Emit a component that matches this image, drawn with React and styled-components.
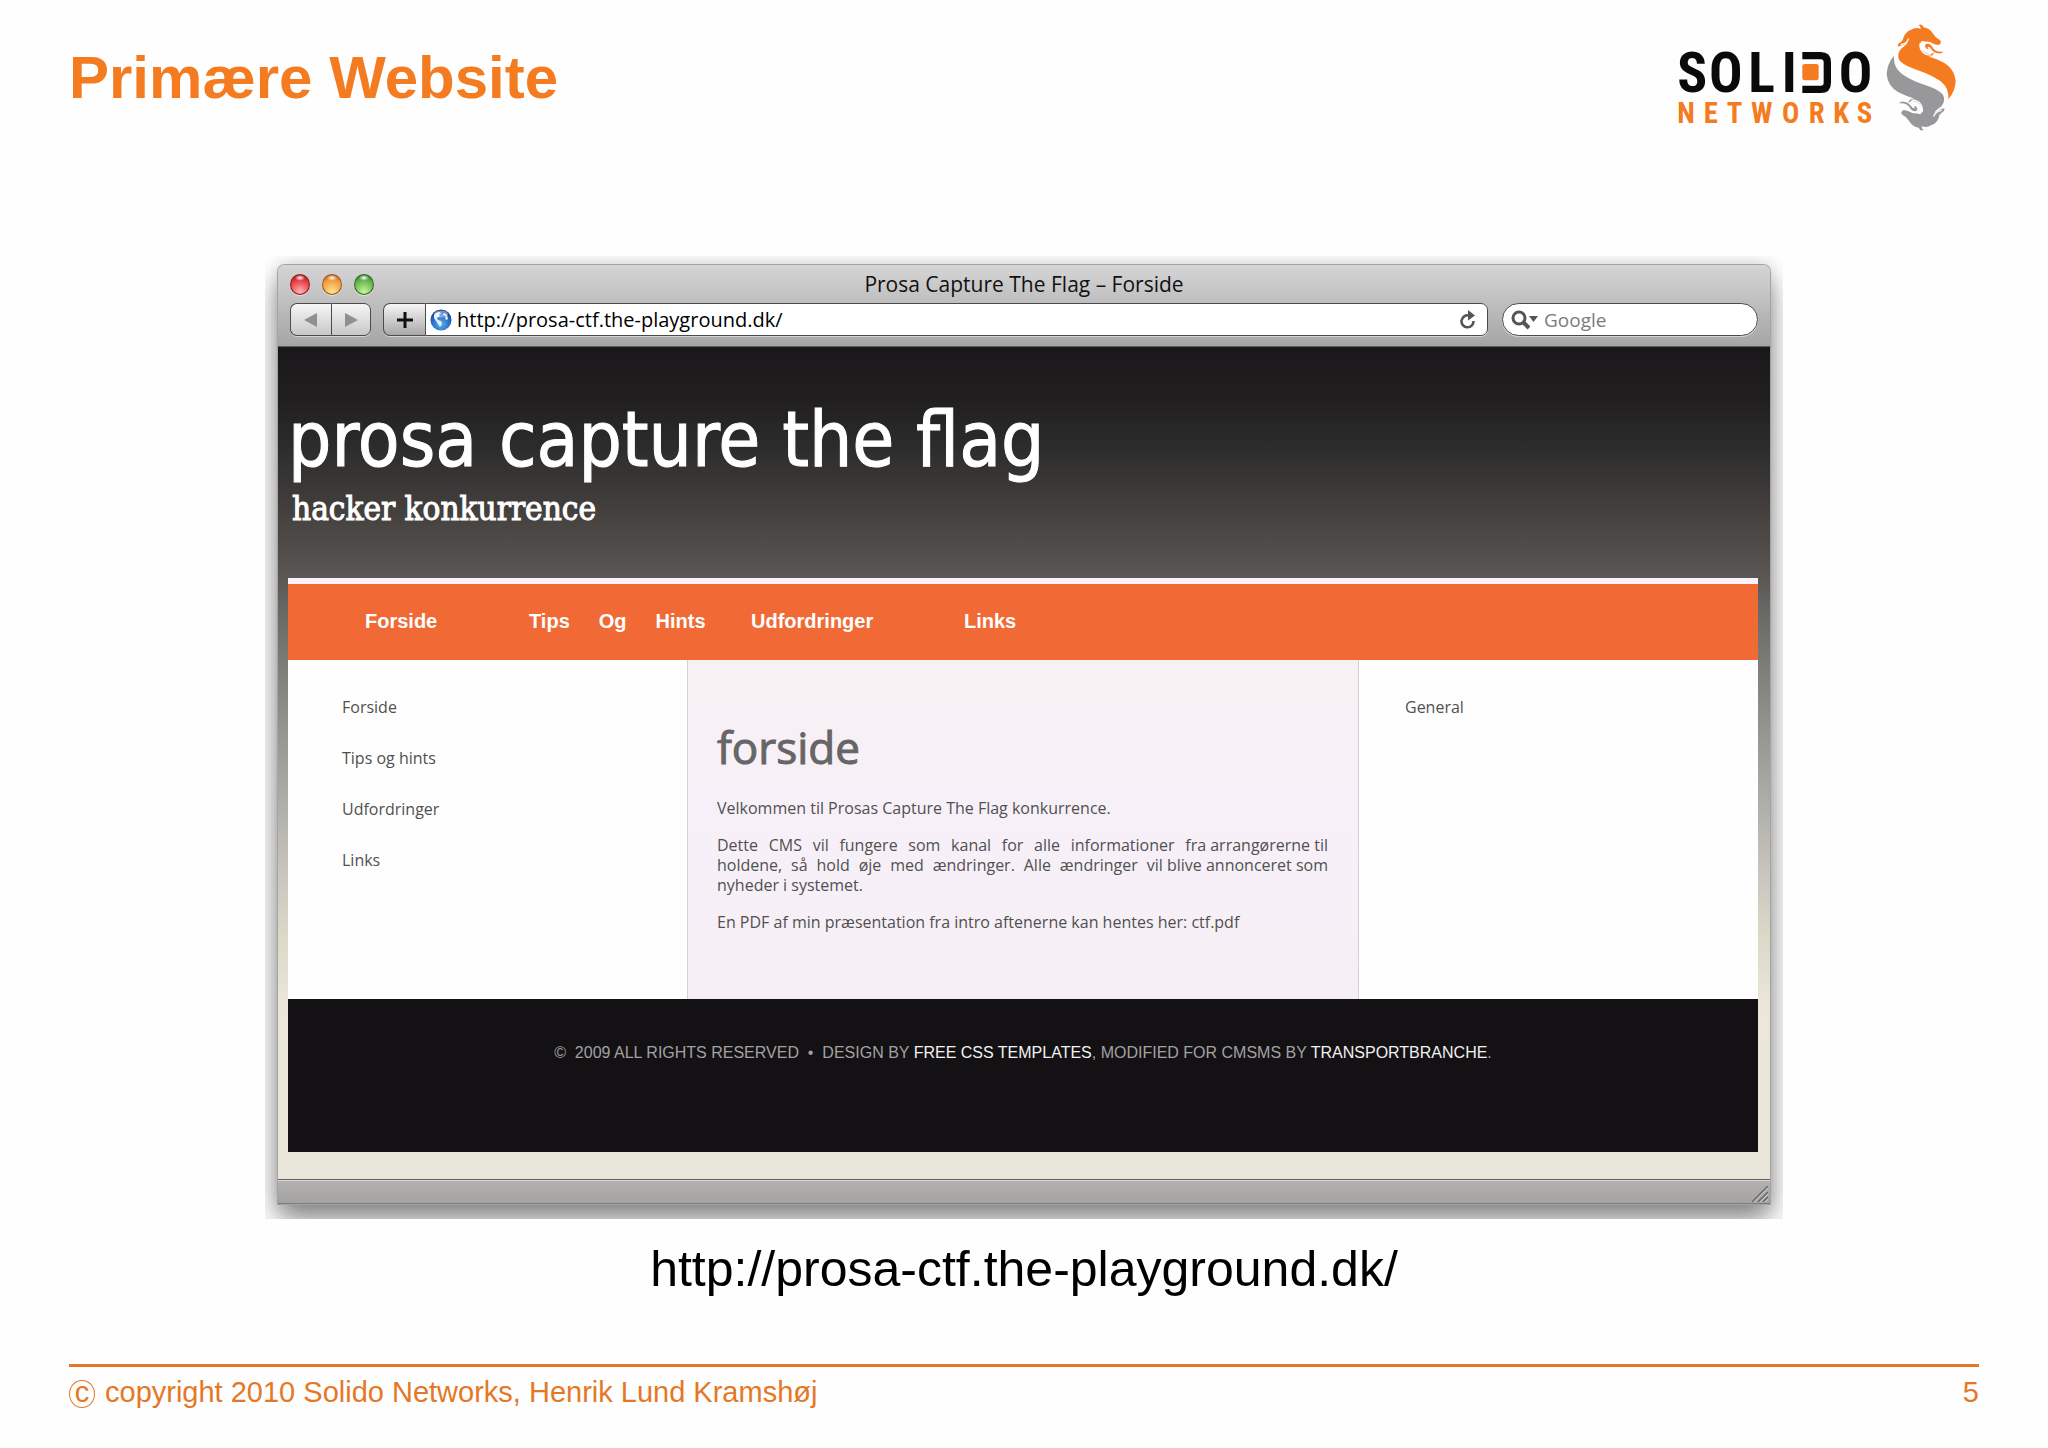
import React from 'react';
import styled, { createGlobalStyle } from 'styled-components';

const fonts = {
  slide: '"Liberation Sans", Arial, sans-serif',
  chrome: '"Open Sans", "Lucida Grande", sans-serif',
  display: '"DejaVu Sans Condensed", Tahoma, sans-serif',
  page: '"Open Sans", Tahoma, sans-serif',
  serif: '"DejaVu Serif Condensed", Georgia, serif',
  logo: '"Roboto Condensed", Roboto, sans-serif',
};

const colors = {
  brand: '#f47b20',
  rule: '#e47826',
  nav: '#f16a35',
  text: '#505050',
};

const GlobalStyle = createGlobalStyle`
  *, *::before, *::after { box-sizing: border-box; }
  body { margin: 0; background: #fefefe; font-family: ${fonts.slide}; }
  h1, h2, p, ul, figure { margin: 0; padding: 0; font-weight: 400; }
  ul { list-style: none; }
  a { color: inherit; text-decoration: none; }
`;

/* ---------- slide ---------- */

const Slide = styled.main`
  display: flex;
  flex-direction: column;
  min-height: 100vh;
  padding: 23px 69px 38px;
`;

const SlideHeader = styled.header`
  display: flex;
  justify-content: space-between;
  align-items: flex-start;
  padding-right: 22px;
`;

const SlideTitle = styled.h1`
  && { font-weight: 700; }
  padding-top: 19px;
  font-size: 60px;
  line-height: 72px;
  color: ${colors.brand};
`;

const LogoSvg = styled.svg`
  display: block;
  width: 280px;
  height: 108px;
  flex: none;
  font-family: ${fonts.logo};
  font-weight: 700;
`;

const Figure = styled.figure`
  margin-top: 125px;
  display: flex;
  flex-direction: column;
`;

const Shot = styled.div`
  margin: 0 196px;
  padding: 9px 13px 15px;
  overflow: hidden;
`;

const Caption = styled.figcaption`
  padding-top: 20px;
  font-size: 50px;
  line-height: 60px;
  text-align: center;
  color: #000;
`;

const SlideFooter = styled.footer`
  display: flex;
  justify-content: space-between;
  margin-top: auto;
  padding-top: 7px;
  border-top: 3px solid ${colors.rule};
  font-size: 29px;
  line-height: 36px;
  color: ${colors.rule};
`;

const Copyright = styled.p`
  display: flex;
  align-items: center;
  gap: 10px;
`;

const CircledC = styled.span`
  display: flex;
  align-items: center;
  justify-content: center;
  width: 26px;
  height: 28px;
  margin-top: 4px;
  padding-bottom: 4px;
  border: 1px solid currentColor;
  border-radius: 50%;
  line-height: 28px;
`;

/* ---------- browser window ---------- */

const Window = styled.section`
  border-radius: 7px 7px 0 0;
  box-shadow: 0 0 0 1px #a4a3a4, 0 0 18px rgba(0, 0, 0, 0.16),
    0 16px 28px rgba(0, 0, 0, 0.45);
`;

const Chrome = styled.div`
  border-radius: 7px 7px 0 0;
  border-bottom: 1px solid #5d5c5d;
  background: linear-gradient(#d6d5d6, #bfbebf 48%, #a6a5a6);
  padding: 0 12px 10px;
`;

const TitleBar = styled.div`
  display: grid;
  grid-template-columns: 1fr auto 1fr;
  align-items: center;
  height: 38px;
  font: 21px/28px ${fonts.chrome};
  color: #111;
`;

const Lights = styled.div`
  display: flex;
  gap: 12px;
`;

const Light = styled.button`
  width: 20px;
  height: 21px;
  padding: 0;
  border: 1px solid ${(p) => p.$edge};
  border-radius: 50%;
  background: radial-gradient(ellipse 5px 3px at 50% 15%, #fff, transparent),
    radial-gradient(circle at 50% 88%, ${(p) => p.$glow}, ${(p) => p.$tone} 65%, ${(p) => p.$edge});
  box-shadow: 0 1px 1px rgba(255, 255, 255, 0.6);
`;

const ToolBar = styled.div`
  display: flex;
  height: 33px;
`;

const ToolButton = styled.button`
  display: flex;
  align-items: center;
  justify-content: center;
  width: ${(p) => p.$width};
  padding: 0;
  border: 1px solid #4c4b4c;
  border-right-width: ${(p) => (p.$joined ? 0 : '1px')};
  border-radius: ${(p) => p.$radius};
  margin-right: ${(p) => (p.$joined ? 0 : '12px')};
  background: linear-gradient(#f7f6f7, ${(p) => p.$end || '#c9c8c9'});
  box-shadow: 0 1px 0 rgba(255, 255, 255, 0.5);
`;

const Field = styled.label`
  display: flex;
  align-items: center;
  gap: 5px;
  flex: ${(p) => (p.$grow ? '1' : '0 0 256px')};
  min-width: 0;
  margin-right: ${(p) => (p.$grow ? '14px' : 0)};
  padding: ${(p) => (p.$grow ? '0 11px 0 4px' : '0 16px 0 8px')};
  border: 1px solid #4c4b4c;
  border-radius: ${(p) => (p.$grow ? '0 7px 7px 0' : '17px')};
  background: #fff;
  box-shadow: 0 1px 0 rgba(255, 255, 255, 0.5);
`;

const FieldInput = styled.input`
  flex: 1;
  min-width: 0;
  padding: 0;
  border: 0;
  outline: 0;
  background: none;
  color: #000;
  font: ${(p) => p.$size}/28px ${fonts.chrome};
  &::placeholder { color: #7b7b7b; opacity: 1; }
`;

const IconButton = styled.button`
  display: flex;
  padding: 0;
  border: 0;
  background: none;
`;

const StatusBar = styled.div`
  display: flex;
  justify-content: flex-end;
  align-items: flex-end;
  height: 25px;
  padding: 0 2px 2px 0;
  border-top: 1px solid #636261;
  box-shadow: inset 0 1px 0 #d6d5d2, inset 0 -1px 0 #7d7c7b;
  background: linear-gradient(#b3b2b0, #a3a2a0);
`;

/* ---------- website ---------- */

const Site = styled.div`
  padding: 0 12px 27px 10px;
  background: linear-gradient(
    #1a181a, #201e1f 6%, #2d2c2c 12%, #413e3c 19%, #5b5755 28%, #666663 31%,
    #8c8b87 43%, #b2b1ac 56%, #ccc6bf 64%, #dcd9c9 71%, #ece7da 80%, #e9e6da
  );
`;

const Masthead = styled.header`
  padding: 49px 0 47px;
  color: #fff;
  -webkit-text-stroke: 1px #fff;
`;

const SiteTitle = styled.h2`
  font: 76px/88px ${fonts.display};
`;

const Tagline = styled.p`
  padding: 3px 0 0 4px;
  font: 33px/44px ${fonts.serif};
`;

const SiteNav = styled.nav`
  display: grid;
  grid-template-columns: 164px 222px 213px auto;
  padding: 25px 77px 27px;
  border-top: 6px solid #fbf1f8;
  background: ${colors.nav};
  font-size: 20px;
  font-weight: 700;
  line-height: 24px;
  color: #fff;
`;

const NavLink = styled.a`
  display: flex;
  gap: 29px;
`;

const Columns = styled.div`
  display: grid;
  grid-template-columns: 19fr 32fr 19fr;
  background: #fefefe;
  font: 16px/20px ${fonts.page};
  color: ${colors.text};
`;

const SideList = styled.ul`
  display: flex;
  flex-direction: column;
  gap: 31px;
  padding: 37px ${(p) => p.$inset} 0;
`;

const Article = styled.article`
  display: flex;
  flex-direction: column;
  gap: 17px;
  padding: 59px 30px 67px 29px;
  border: solid #d5d2d6;
  border-width: 0 1px;
  background: linear-gradient(#f7f1f3, #f7f0f8 40%, #f6eff6);
`;

const ArticleTitle = styled.h2`
  padding-bottom: 6px;
  font-size: 44px;
  line-height: 56px;
  color: #666;
  -webkit-text-stroke: 1px #666;
`;

const Paragraph = styled.p`
  text-align: justify;
`;

const Tight = styled.span`
  display: inline-block;
`;

const SiteFooter = styled.footer`
  padding: 44px 0 89px;
  background: #131113;
  font-size: 16px;
  line-height: 20px;
  text-align: center;
  color: #a2a1a2;
  a { color: #f2f2f0; }
`;

/* ---------- drawings ---------- */

const BEAST =
  'M776 44 Q786 39 791 51 Q809 54 818 69 Q826 83 842 91 Q845 98 838 103 Q828 105 818 99 Q808 92 797 94 ' +
  'Q790 90 784 93 Q776 104 784 117 Q794 131 812 131 Q820 129 823 124 Q818 141 803 138 Q826 144 852 157 ' +
  'Q884 176 887 211 Q886 242 865 267 Q868 233 842 213 Q815 194 778 181 Q742 170 724 156 Q713 148 715 131 ' +
  'Q718 117 731 109 Q742 102 744 93 Q736 103 714 109 Q712 100 722 96 Q730 91 731 80 Q738 63 754 58 Q765 50 782 55 Q783 49 776 44 Z';

function Beast() {
  return (
    <>
      <path d={BEAST} />
      <path
        d="M797 112 Q792 103 800 100 Q812 99 819 113 Q828 127 850 124 Q846 130 836 129 Q820 127 813 115 Q808 107 803 110 Q802 114 806 116 Q800 117 797 112 Z"
      />
      <path d="M781 98 Q777 112 787 124 Q797 134 813 134" fill="none" stroke="#fefefe" strokeWidth="4" />
      <path d="M746 84 Q742 100 722 103" fill="none" stroke="#fefefe" strokeWidth="4" />
    </>
  );
}

function Logo() {
  return (
    <LogoSvg viewBox="51 38 840 324" role="img" aria-label="Solido Networks">
      <text x="52 147 265 365" y="246" fontSize="167" fill="#0a0a0a">SOLI</text>
      <path
        d="M427 136 H482 Q502 136 502 156 V217 Q502 237 482 237 H427"
        fill="none" stroke="#0a0a0a" strokeWidth="22"
      />
      <rect x="427" y="161" width="49" height="49" rx="7" fill={colors.brand} />
      <text x="536" y="246" fontSize="167" fill="#0a0a0a">O</text>
      <text x="52 131 200 273 366 446 520 590" y="339" fontSize="86" fill={colors.brand}>NETWORKS</text>
      <g fill={colors.brand}><Beast /></g>
      <g fill="#98989a" transform="rotate(180 783.5 201.5)"><Beast /></g>
    </LogoSvg>
  );
}

function Arrow({ flip }) {
  return (
    <svg width="14" height="14" viewBox="0 0 14 14">
      <path d={flip ? 'M1 0 L14 7 L1 14 Z' : 'M13 0 L0 7 L13 14 Z'} fill="#919091" />
    </svg>
  );
}

function Plus() {
  return (
    <svg width="16" height="16" viewBox="0 0 16 16">
      <path d="M8 0 V16 M0 8 H16" stroke="#111" strokeWidth="3" />
    </svg>
  );
}

function Globe() {
  return (
    <svg width="22" height="22" viewBox="0 0 22 22">
      <defs>
        <radialGradient id="sea" cx="50%" cy="70%" r="65%">
          <stop offset="0" stopColor="#5fb0f0" />
          <stop offset="0.6" stopColor="#2c72c8" />
          <stop offset="1" stopColor="#173f88" />
        </radialGradient>
      </defs>
      <circle cx="11" cy="11" r="10.5" fill="url(#sea)" />
      <path
        d="M4 6 Q6 3 10 3 L11 5 L9 5 L10 7 L7 9 L8 11 L11 12 L12 15 L10 18 L8 15 L6 12 L4 9 Z M14 4 L17 6 L18 10 L16 11 L15 9 L16 7 L13 6 Z"
        fill="#dff0fc"
      />
      <ellipse cx="11" cy="5" rx="7" ry="3.5" fill="#fff" opacity="0.4" />
    </svg>
  );
}

function Reload() {
  return (
    <svg width="16" height="20" viewBox="0 0 16 20">
      <path d="M13.5 11 A6 6 0 1 1 9 5.500" fill="none" stroke="#555" strokeWidth="2.600" />
      <path d="M8 0 L15 5.500 L8 10.500 Z" fill="#555" />
    </svg>
  );
}

function Search() {
  return (
    <svg width="28" height="20" viewBox="0 0 28 20">
      <circle cx="8" cy="8" r="6" fill="none" stroke="#555" strokeWidth="3" />
      <path d="M12 12 L18 18" stroke="#555" strokeWidth="4" />
      <path d="M18 6 H27 L22.500 12 Z" fill="#555" />
    </svg>
  );
}

function Grip() {
  return (
    <svg width="16" height="16" viewBox="0 0 16 16">
      <path d="M0 16 L16 0 M6 16 L16 6 M11 16 L16 11" stroke="#6b6a69" strokeWidth="1.500" />
      <path d="M2 16 L16 2 M8 16 L16 8 M13 16 L16 13" stroke="#d0cfcc" strokeWidth="1" />
    </svg>
  );
}

/* ---------- composition ---------- */

const LIGHTS = [
  { name: 'Luk', edge: '#8d1a1f', tone: '#e5343c', glow: '#ffb5b5' },
  { name: 'Minimer', edge: '#a3521a', tone: '#f0963a', glow: '#ffe58e' },
  { name: 'Zoom', edge: '#2f6a22', tone: '#5fae48', glow: '#c8f59a' },
];

const NAV = [['Forside'], ['Tips', 'Og', 'Hints'], ['Udfordringer'], ['Links']];
const MENU = ['Forside', 'Tips og hints', 'Udfordringer', 'Links'];

function Website() {
  return (
    <Site>
      <Masthead>
        <SiteTitle>prosa capture the flag</SiteTitle>
        <Tagline>hacker konkurrence</Tagline>
      </Masthead>
      <SiteNav>
        {NAV.map((words) => (
          <NavLink href="#" key={words[0]}>
            {words.map((w) => <span key={w}>{w}</span>)}
          </NavLink>
        ))}
      </SiteNav>
      <Columns>
        <SideList $inset="54px">
          {MENU.map((item) => <li key={item}><a href="#">{item}</a></li>)}
        </SideList>
        <Article>
          <ArticleTitle>forside</ArticleTitle>
          <Paragraph>Velkommen til Prosas Capture The Flag konkurrence.</Paragraph>
          <Paragraph>
            Dette CMS vil fungere som kanal for alle informationer <Tight>fra arrangørerne til</Tight>{' '}
            holdene, så hold øje med ændringer. Alle ændringer <Tight>vil blive annonceret som</Tight>{' '}
            nyheder i systemet.
          </Paragraph>
          <Paragraph>
            En PDF af min præsentation fra intro aftenerne kan hentes her: <a href="#">ctf.pdf</a>
          </Paragraph>
        </Article>
        <SideList $inset="46px">
          <li><a href="#">General</a></li>
        </SideList>
      </Columns>
      <SiteFooter>
        ©&nbsp; 2009 ALL RIGHTS RESERVED &nbsp;•&nbsp; DESIGN BY <a href="#">FREE CSS TEMPLATES</a>, MODIFIED FOR
        CMSMS BY <a href="#">TRANSPORTBRANCHE</a>.
      </SiteFooter>
    </Site>
  );
}

function Browser() {
  return (
    <Window>
      <Chrome>
        <TitleBar>
          <Lights>
            {LIGHTS.map((l) => (
              <Light key={l.name} aria-label={l.name} $edge={l.edge} $tone={l.tone} $glow={l.glow} />
            ))}
          </Lights>
          <span>Prosa Capture The Flag – Forside</span>
        </TitleBar>
        <ToolBar>
          <ToolButton aria-label="Tilbage" $width="41px" $radius="7px 0 0 7px" $joined><Arrow /></ToolButton>
          <ToolButton aria-label="Frem" $width="40px" $radius="0 7px 7px 0"><Arrow flip /></ToolButton>
          <ToolButton aria-label="Tilføj bogmærke" $width="42px" $radius="7px 0 0 7px" $end="#a9a8a9" $joined>
            <Plus />
          </ToolButton>
          <Field $grow>
            <Globe />
            <FieldInput aria-label="Adresse" $size="20px" defaultValue="http://prosa-ctf.the-playground.dk/" />
            <IconButton aria-label="Genindlæs"><Reload /></IconButton>
          </Field>
          <Field>
            <Search />
            <FieldInput aria-label="Søg" $size="19px" placeholder="Google" />
          </Field>
        </ToolBar>
      </Chrome>
      <Website />
      <StatusBar><Grip /></StatusBar>
    </Window>
  );
}

export default function App() {
  return (
    <>
      <GlobalStyle />
      <Slide>
        <SlideHeader>
          <SlideTitle>Primære Website</SlideTitle>
          <Logo />
        </SlideHeader>
        <Figure>
          <Shot><Browser /></Shot>
          <Caption>http://prosa-ctf.the-playground.dk/</Caption>
        </Figure>
        <SlideFooter>
          <Copyright>
            <CircledC>c</CircledC>
            <span>copyright 2010 Solido Networks, Henrik Lund Kramshøj</span>
          </Copyright>
          <span>5</span>
        </SlideFooter>
      </Slide>
    </>
  );
}
